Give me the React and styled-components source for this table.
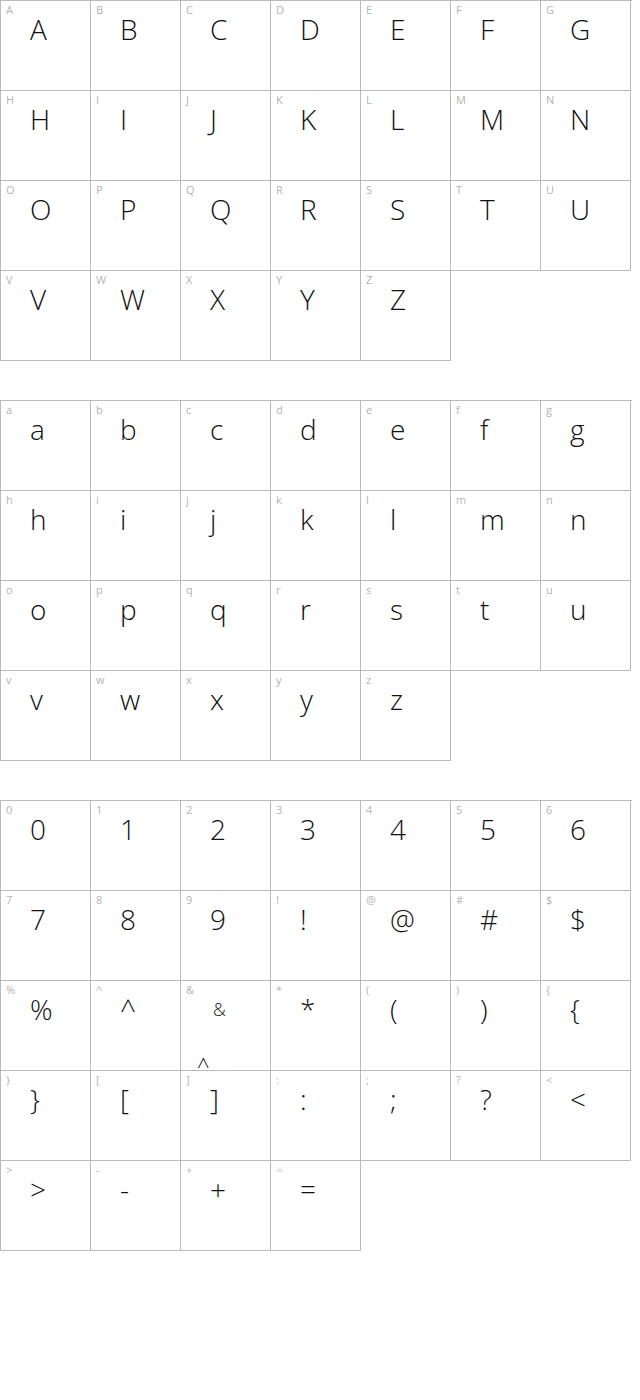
import styled, { createGlobalStyle } from "styled-components"

const upper = "ABCDEFGHIJKLMNOPQRSTUVWXYZ".split("")
const lower = "abcdefghijklmnopqrstuvwxyz".split("")
// reference order for symbols
const symbols = [
  "0", "1", "2", "3", "4", "5", "6",
  "7", "8", "9", "!", "@", "#", "$",
  "%", "^", "&", "*", "(", ")", "{",
  "}", "[", "]", ":", ";", "?", "<",
  ">", "-", "+", "=",
]

export default function App() {
  return (
    <Page>
      <Global />
      <CharGrid chars={upper} />
      <CharGrid chars={lower} />
      <CharGrid chars={symbols} />
    </Page>
  )
}

function CharGrid({ chars }) {
  return (
    <Grid>
      {chars.map((c) => (
        <Cell key={c}>
          <Label>{c}</Label>
          <Glyph $small={c === "&"}>{c}</Glyph>
          {c === "&" && <Stray>^</Stray>}
        </Cell>
      ))}
    </Grid>
  )
}

const Global = createGlobalStyle`
  body {
    margin: 0;
    background: #fff;
    font-family: "Open Sans", "Liberation Sans", sans-serif;
  }
`

const Page = styled.div`
  display: flex;
  flex-direction: column;
  gap: 39px;
  width: 640px;
`

const Grid = styled.div`
  display: grid;
  grid-template-columns: repeat(7, 90px);
  grid-auto-rows: 90px;
  width: 631px;
  border-left: 1px solid #bbb;
  border-top: 1px solid #bbb;
`

const Cell = styled.div`
  position: relative;
  box-sizing: border-box;
  border-right: 1px solid #bbb;
  border-bottom: 1px solid #bbb;
  padding: 3px 0 0 5px;
`

const Label = styled.div`
  font-size: 11px;
  line-height: 12px;
  color: #b4b4b4;
`

const Glyph = styled.div`
  font-size: ${(p) => (p.$small ? "18px" : "28px")};
  font-weight: 300;
  line-height: 26px;
  margin-left: ${(p) => (p.$small ? "27px" : "24px")};
  color: #111;
`

const Stray = styled.span`
  position: absolute;
  left: 16px;
  bottom: -10px;
  font-size: 22px;
  font-weight: 300;
  color: #111;
`
